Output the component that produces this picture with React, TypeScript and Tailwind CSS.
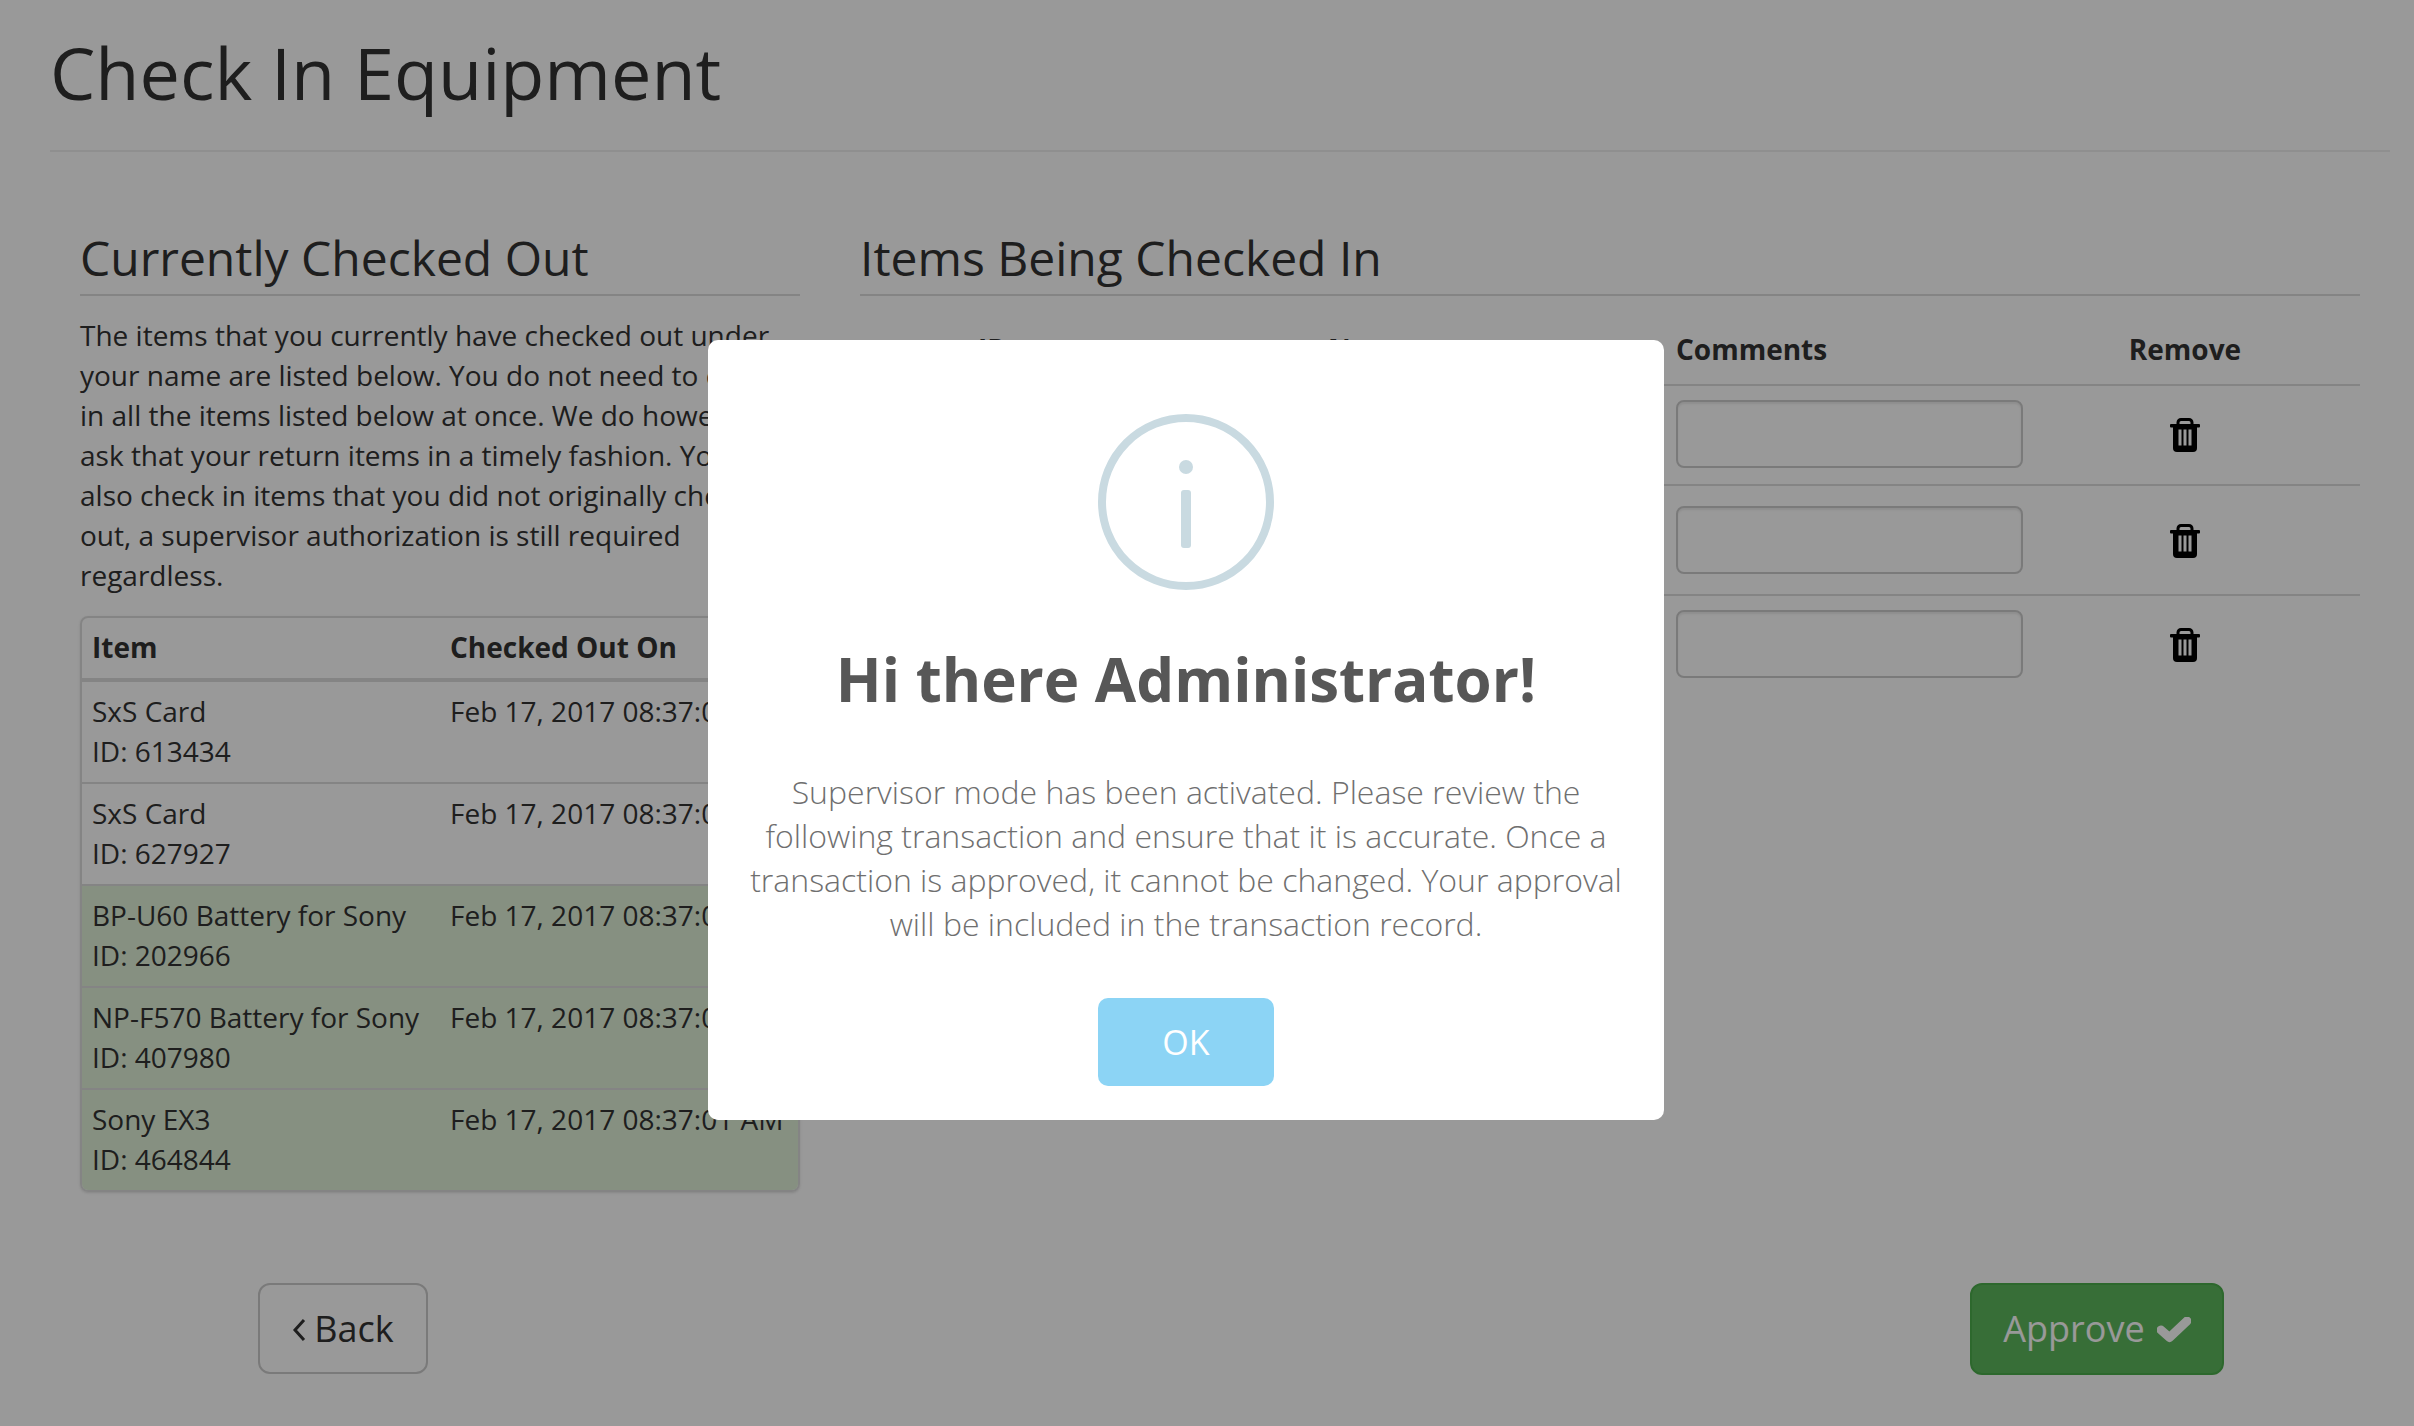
const CHECKED_OUT = [
  { name: "SxS Card", id: "613434", green: false },
  { name: "SxS Card", id: "627927", green: false },
  { name: "BP-U60 Battery for Sony", id: "202966", green: true },
  { name: "NP-F570 Battery for Sony", id: "407980", green: true },
  { name: "Sony EX3", id: "464844", green: true },
];

// top padding differs per row in the original table
const CHECK_IN_ROWS = [
  { className: "pt-[14px] pb-[16px] border-b-2 border-[#ddd]" },
  { className: "pt-[20px] pb-[20px] border-b-2 border-[#ddd]" },
  { className: "pt-[14px] pb-[16px]" },
];

function TrashIcon() {
  return (
    <svg width="30" height="34" viewBox="0 0 30 34" className="mt-[2px] block">
      <path d="M8 7V4.5A3 3 0 0 1 11 1.5H19A3 3 0 0 1 22 4.5V7" fill="none" stroke="#000" strokeWidth="3" />
      <rect x="0" y="6" width="30" height="3.5" rx="1" fill="#000" />
      <path d="M3 9H27V30A4 4 0 0 1 23 34H7A4 4 0 0 1 3 30Z" fill="#000" />
      <rect x="8.5" y="11.5" width="3" height="16" fill="#fff" />
      <rect x="13.5" y="11.5" width="3" height="16" fill="#fff" />
      <rect x="18.5" y="11.5" width="3" height="16" fill="#fff" />
    </svg>
  );
}

export default function App() {
  return (
    <div className="relative h-[1426px] overflow-hidden bg-white font-['Open_Sans',sans-serif] text-[28px] leading-[40px] text-[#333]">
      {/* Page header */}
      <div className="ml-[50px] mr-[24px] h-[152px] border-b-2 border-[#eee]">
        <h1 className="pt-[32px] text-[72px] leading-[80px] font-normal">Check In Equipment</h1>
      </div>

      <div className="ml-[80px] mr-[54px] mt-[58px] flex gap-[60px]">
        {/* Currently checked out */}
        <div className="w-[720px] shrink-0">
          <h3 className="border-b-2 border-[#ddd] pt-[11px] text-[48px] leading-[73px] font-normal">
            Currently Checked Out
          </h3>
          <p className="mt-[19px]">
            The items that you currently have checked out under your name are listed below. You do not need to check
            in all the items listed below at once. We do however ask that your return items in a timely fashion. You
            may also check in items that you did not originally check out, a supervisor authorization is still required
            regardless.
          </p>
          <div className="mt-[21px] overflow-hidden rounded-[8px] border-2 border-[#ddd] shadow-sm">
            <div className="flex border-b-4 border-[#ddd] px-[10px] pt-[9px] pb-[11px] font-bold">
              <div className="w-[358px]">Item</div>
              <div>Checked Out On</div>
            </div>
            {CHECKED_OUT.map((row, i) => (
              <div
                key={row.id}
                className={`flex px-[10px] pt-[9px] pb-[11px] ${i > 0 ? "border-t-2 border-[#ddd]" : ""} ${
                  row.green ? "bg-[#dff0d8]" : ""
                }`}
              >
                <div className="w-[358px]">
                  {row.name}
                  <br />
                  ID: {row.id}
                </div>
                <div className="whitespace-nowrap">Feb 17, 2017 08:37:01 AM</div>
              </div>
            ))}
          </div>
        </div>

        {/* Items being checked in */}
        <div className="flex-1">
          <h3 className="border-b-2 border-[#ddd] pt-[11px] text-[48px] leading-[73px] font-normal">
            Items Being Checked In
          </h3>
          <div className="mt-[1px] flex border-b-2 border-[#ddd] pt-[32px] pb-[15px] font-bold">
            <div className="w-[118px] shrink-0" />
            <div className="w-[350px] shrink-0">ID</div>
            <div className="w-[348px] shrink-0">Name</div>
            <div className="w-[347px] shrink-0">Comments</div>
            <div className="flex-1 pr-[13px] text-center">Remove</div>
          </div>
          {CHECK_IN_ROWS.map((row, i) => (
            <div key={i} className={`flex items-center ${row.className}`}>
              <div className="w-[816px] shrink-0" />
              <input className="h-[68px] w-[347px] shrink-0 rounded-[8px] border-2 border-[#ccc] shadow-[inset_0_2px_2px_rgba(0,0,0,0.075)]" />
              <div className="flex flex-1 justify-center pr-[13px]">
                <TrashIcon />
              </div>
            </div>
          ))}
        </div>
      </div>

      {/* Footer buttons */}
      <div className="mt-[91px] ml-[258px] mr-[190px] flex justify-between">
        <button className="flex h-[91px] w-[170px] items-center justify-center gap-[8px] rounded-[12px] border-2 border-[#ccc] text-[36px]">
          <svg width="14" height="24" viewBox="0 0 14 24" className="mt-[2px]">
            <path d="M12 2L3 12L12 22" fill="none" stroke="#333" strokeWidth="3" />
          </svg>
          Back
        </button>
        <button className="flex h-[92px] w-[254px] items-center justify-center gap-[12px] rounded-[12px] border-2 border-[#4cae4c] bg-[#5cb85c] text-[36px] text-white">
          Approve
          <svg width="34" height="26" viewBox="0 0 34 26" className="mt-[2px]">
            <path d="M4 13L12.5 20.5L30 4" fill="none" stroke="#fff" strokeWidth="9" strokeLinejoin="round" strokeLinecap="round" />
          </svg>
        </button>
      </div>

      {/* Dialog overlay */}
      <div className="absolute inset-0 bg-black/40">
        <div className="absolute top-[340px] left-[708px] flex h-[780px] w-[956px] flex-col items-center rounded-[10px] bg-white">
          <div className="relative mt-[74px] h-[176px] w-[176px] rounded-full border-[8px] border-[#c9dae1]">
            <div className="absolute top-[38px] left-1/2 h-[14px] w-[14px] -translate-x-1/2 rounded-full bg-[#c9dae1]" />
            <div className="absolute top-[68px] left-1/2 h-[58px] w-[10px] -translate-x-1/2 rounded-[3px] bg-[#c9dae1]" />
          </div>
          <h2 className="mt-[49px] text-[60px] leading-[80px] font-bold text-[#575757]">Hi there Administrator!</h2>
          <p className="mt-[51px] w-[880px] text-center text-[32px] leading-[44px] font-light text-[#6f6f6f]">
            Supervisor mode has been activated. Please review the following transaction and ensure that it is accurate.
            Once a transaction is approved, it cannot be changed. Your approval will be included in the transaction
            record.
          </p>
          <button className="mt-[52px] h-[88px] w-[176px] rounded-[10px] bg-[#8cd4f5] text-[34px] font-medium text-white">
            OK
          </button>
        </div>
      </div>
    </div>
  );
}
